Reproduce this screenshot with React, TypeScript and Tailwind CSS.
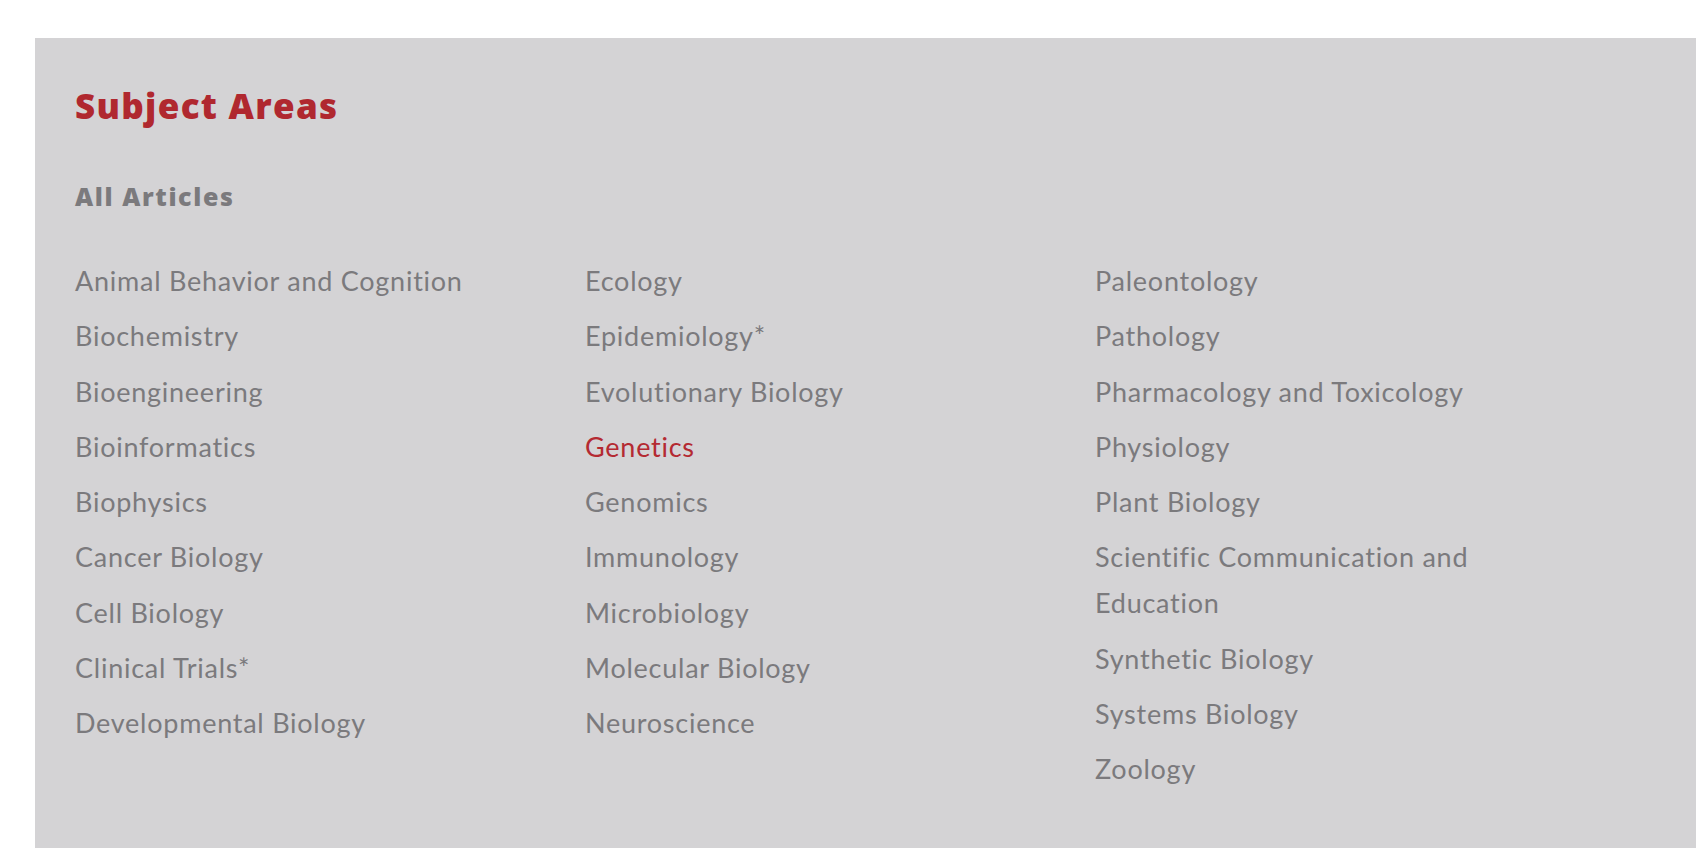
import React from "react";

const col1 = [
  "Animal Behavior and Cognition",
  "Biochemistry",
  "Bioengineering",
  "Bioinformatics",
  "Biophysics",
  "Cancer Biology",
  "Cell Biology",
  "Clinical Trials*",
  "Developmental Biology",
];
const col2 = [
  "Ecology",
  "Epidemiology*",
  "Evolutionary Biology",
  "Genetics",
  "Genomics",
  "Immunology",
  "Microbiology",
  "Molecular Biology",
  "Neuroscience",
];
const col3 = [
  "Paleontology",
  "Pathology",
  "Pharmacology and Toxicology",
  "Physiology",
  "Plant Biology",
  "Scientific Communication and Education",
  "Synthetic Biology",
  "Systems Biology",
  "Zoology",
];

function Column({ items }: { items: string[] }) {
  return (
    <ul className="flex flex-col gap-[9.3px]">
      {items.map((t) => (
        <li key={t}>
          <a
            href="#"
            className={
              "text-[27px] leading-[46px] tracking-[0.75px] [font-variant-ligatures:no-common-ligatures] " +
              (t === "Genetics" ? "text-[#b42a32]" : "text-[#7b7a7d]")
            }
          >
            {t}
          </a>
        </li>
      ))}
    </ul>
  );
}

export default function App() {
  return (
    <div
      className="min-h-screen bg-white pt-[38px] pl-[35px]"
      style={{ fontFamily: "Lato, 'Open Sans', sans-serif" }}
    >
      <div className="min-h-[810px] bg-[#d4d3d5] pl-[40px] pt-[50px]">
        <h1
          className="text-[35px] font-extrabold leading-none tracking-[1.3px] text-[#b0282f]"
          style={{ fontFamily: "'Open Sans', Lato, sans-serif" }}
        >
          Subject Areas
        </h1>
        <h2
          className="mt-[61px] text-[25px] font-extrabold leading-none tracking-[1.6px] text-[#7b7a7d]"
          style={{ fontFamily: "'Open Sans', Lato, sans-serif" }}
        >
          All Articles
        </h2>
        <div className="mt-[49px] grid grid-cols-[510px_510px_420px]">
          <Column items={col1} />
          <Column items={col2} />
          <Column items={col3} />
        </div>
      </div>
    </div>
  );
}
